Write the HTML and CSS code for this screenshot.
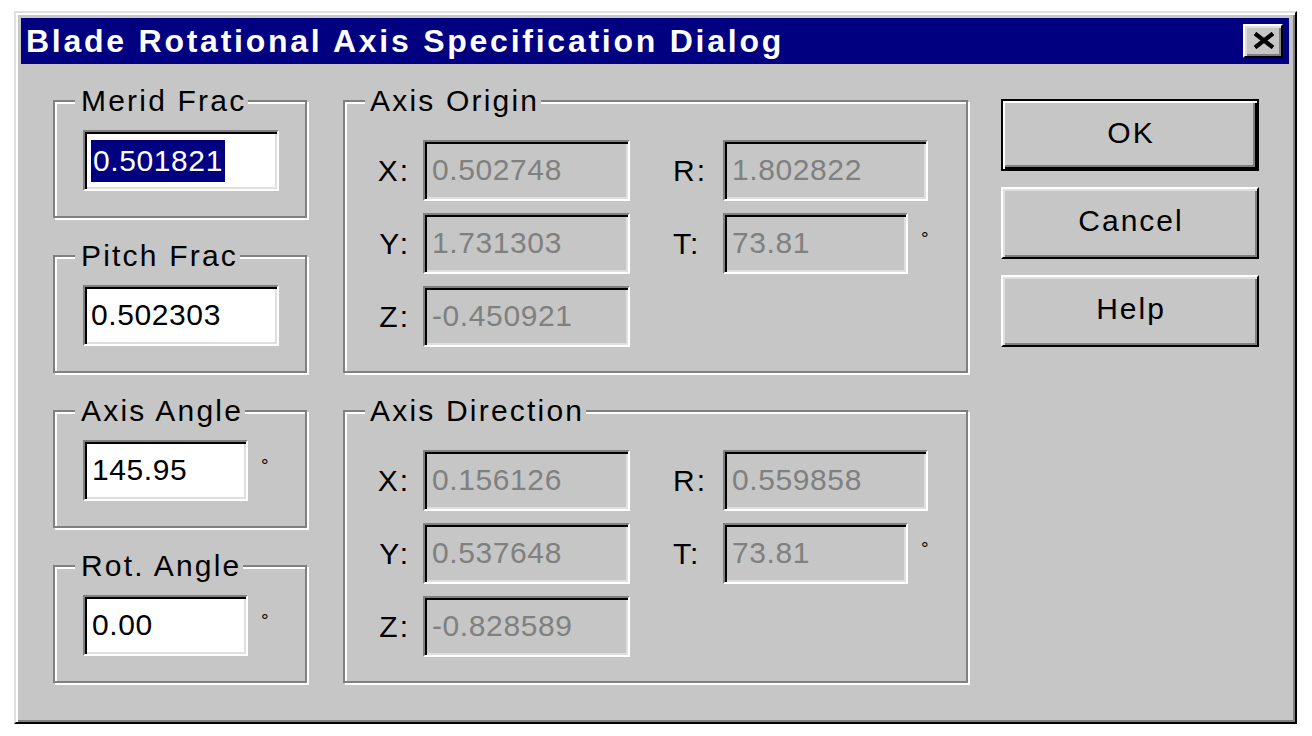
FILE: index.html
```html
<!DOCTYPE html>
<html>
<head>
<meta charset="utf-8">
<title>Blade Rotational Axis Specification Dialog</title>
<link rel="stylesheet" href="styles.css">
</head>
<body>
<div class="dialog">
  <div class="titlebar">
    <span class="title">Blade Rotational Axis Specification Dialog</span>
    <div class="close" aria-label="Close">
      <svg width="24" height="17" viewBox="0 0 24 17"><path d="M3 1.5 L21 15.5 M21 1.5 L3 15.5" stroke="#000" stroke-width="4.2" fill="none"/></svg>
    </div>
  </div>
  <div class="content">
    <div class="col-left">
      <fieldset class="grp grp-s">
        <legend>Merid Frac</legend>
        <div class="srow"><div class="edit w196"><span class="sel">0.501821</span></div></div>
      </fieldset>
      <fieldset class="grp grp-s">
        <legend>Pitch Frac</legend>
        <div class="srow"><div class="edit w196">0.502303</div></div>
      </fieldset>
      <fieldset class="grp grp-s">
        <legend>Axis Angle</legend>
        <div class="srow"><div class="edit w165">145.95</div><span class="deg">°</span></div>
      </fieldset>
      <fieldset class="grp grp-s">
        <legend>Rot. Angle</legend>
        <div class="srow"><div class="edit w165">0.00</div><span class="deg">°</span></div>
      </fieldset>
    </div>
    <div class="col-mid">
      <fieldset class="grp grp-l">
        <legend>Axis Origin</legend>
        <div class="rows">
          <div class="xrow"><span class="lab-l">X:</span><div class="edit dis w207">0.502748</div><span class="lab-r">R:</span><div class="edit dis w205">1.802822</div></div>
          <div class="xrow"><span class="lab-l">Y:</span><div class="edit dis w207">1.731303</div><span class="lab-r">T:</span><div class="edit dis w185">73.81</div><span class="deg">°</span></div>
          <div class="xrow"><span class="lab-l">Z:</span><div class="edit dis w207">-0.450921</div></div>
        </div>
      </fieldset>
      <fieldset class="grp grp-l">
        <legend>Axis Direction</legend>
        <div class="rows">
          <div class="xrow"><span class="lab-l">X:</span><div class="edit dis w207">0.156126</div><span class="lab-r">R:</span><div class="edit dis w205">0.559858</div></div>
          <div class="xrow"><span class="lab-l">Y:</span><div class="edit dis w207">0.537648</div><span class="lab-r">T:</span><div class="edit dis w185">73.81</div><span class="deg">°</span></div>
          <div class="xrow"><span class="lab-l">Z:</span><div class="edit dis w207">-0.828589</div></div>
        </div>
      </fieldset>
    </div>
    <div class="col-btn">
      <div class="btn default">OK</div>
      <div class="btn">Cancel</div>
      <div class="btn">Help</div>
    </div>
  </div>
</div>
</body>
</html>
```
FILE: styles.css
```css
html, body {
  margin: 0;
  padding: 0;
  background: #fff;
}
body {
  font-family: "Liberation Sans", Arial, sans-serif;
  font-size: 30px;
  color: #000;
}
.dialog {
  box-sizing: border-box;
  width: 1283px;
  height: 713px;
  margin: 11px 0 0 14px;
  background: #c6c6c6;
  border: 2px solid;
  border-color: #dfdfdf #000 #000 #dfdfdf;
  box-shadow: inset 2px 2px 0 #fff, inset -2px -2px 0 #808080;
  padding: 5px 6px 0 5px;
}
.titlebar {
  height: 46px;
  background: #000080;
  display: flex;
  align-items: center;
  justify-content: space-between;
  padding: 0 6px 0 5px;
}
.title {
  color: #fff;
  font-weight: bold;
  font-size: 32px;
  letter-spacing: 2.75px;
  line-height: 46px;
  white-space: nowrap;
}
.close {
  box-sizing: border-box;
  width: 40px;
  height: 34px;
  background: #c6c6c6;
  border: 2px solid;
  border-color: #fff #000 #000 #fff;
  box-shadow: inset 2px 2px 0 #dfdfdf, inset -2px -2px 0 #808080;
  display: flex;
  align-items: center;
  justify-content: center;
  padding: 0 0 1px 1px;
}
.close svg { display: block; }
.content {
  display: flex;
  align-items: flex-start;
  padding: 22px 0 0 32px;
}
.col-left {
  width: 254px;
  display: flex;
  flex-direction: column;
  gap: 23px;
  margin-right: 36px;
}
.col-mid {
  width: 625px;
  display: flex;
  flex-direction: column;
  gap: 23px;
  margin-right: 33px;
}
.col-btn {
  width: 258px;
  display: flex;
  flex-direction: column;
  gap: 16px;
  margin-top: 13px;
}
.grp {
  box-sizing: border-box;
  margin: 0;
  min-width: 0;
  border: 2px solid #808080;
  box-shadow: inset 2px 2px 0 #fff, 2px 2px 0 #fff;
}
.grp legend {
  font-size: 30px;
  line-height: 30px;
  letter-spacing: 2.2px;
  background: #c6c6c6;
  white-space: nowrap;
}
.grp-s {
  height: 132px;
  padding: 14px 0 0 28px;
}
.grp-s legend {
  margin-left: -8px;
  padding: 0 2px 0 6px;
}
.grp-l {
  height: 287px;
  padding: 24px 0 0 27px;
}
.grp-l legend {
  margin-left: -7px;
  padding: 0 2px 0 5px;
}
.srow, .xrow {
  display: flex;
  align-items: center;
  height: 61px;
}
.rows {
  display: flex;
  flex-direction: column;
  gap: 12px;
}
.edit {
  box-sizing: border-box;
  height: 61px;
  background: #fff;
  border: 2px solid;
  border-color: #808080 #fff #fff #808080;
  box-shadow: inset 2px 2px 0 #000, inset -2px -2px 0 #dfdfdf;
  padding: 0 0 2px 7px;
  font-size: 30px;
  line-height: 55px;
  letter-spacing: 0.6px;
  white-space: nowrap;
  overflow: hidden;
}
.edit.dis {
  background: #c6c6c6;
  color: #808080;
}
.w196 { width: 196px; padding-left: 6px; }
.w165 { width: 165px; }
.w207 { width: 207px; }
.w205 { width: 205px; }
.w185 { width: 185px; }
.sel {
  display: inline-block;
  background: #000080;
  color: #fff;
  line-height: 42px;
  padding: 0 2px;
  vertical-align: middle;
  margin-top: -2px;
}
.lab-l {
  width: 38px;
  text-align: right;
  letter-spacing: 2px;
  margin-right: 13px;
}
.lab-r {
  width: 50px;
  margin-left: 43px;
  letter-spacing: 2px;
}
.deg {
  align-self: flex-start;
  font-size: 19px;
  line-height: 19px;
  margin-top: 16px;
  margin-left: 13px;
}
.btn {
  box-sizing: border-box;
  height: 72px;
  background: #c6c6c6;
  border: 2px solid;
  border-color: #fff #000 #000 #fff;
  box-shadow: inset 2px 2px 0 #dfdfdf, inset -2px -2px 0 #808080;
  display: flex;
  align-items: center;
  justify-content: center;
  font-size: 30px;
  letter-spacing: 2px;
  padding: 0 0 4px 2px;
}
.btn.default {
  border-color: #000;
  box-shadow: inset 2px 2px 0 #fff, inset -2px -2px 0 #000, inset -4px -4px 0 #808080;
}
```
